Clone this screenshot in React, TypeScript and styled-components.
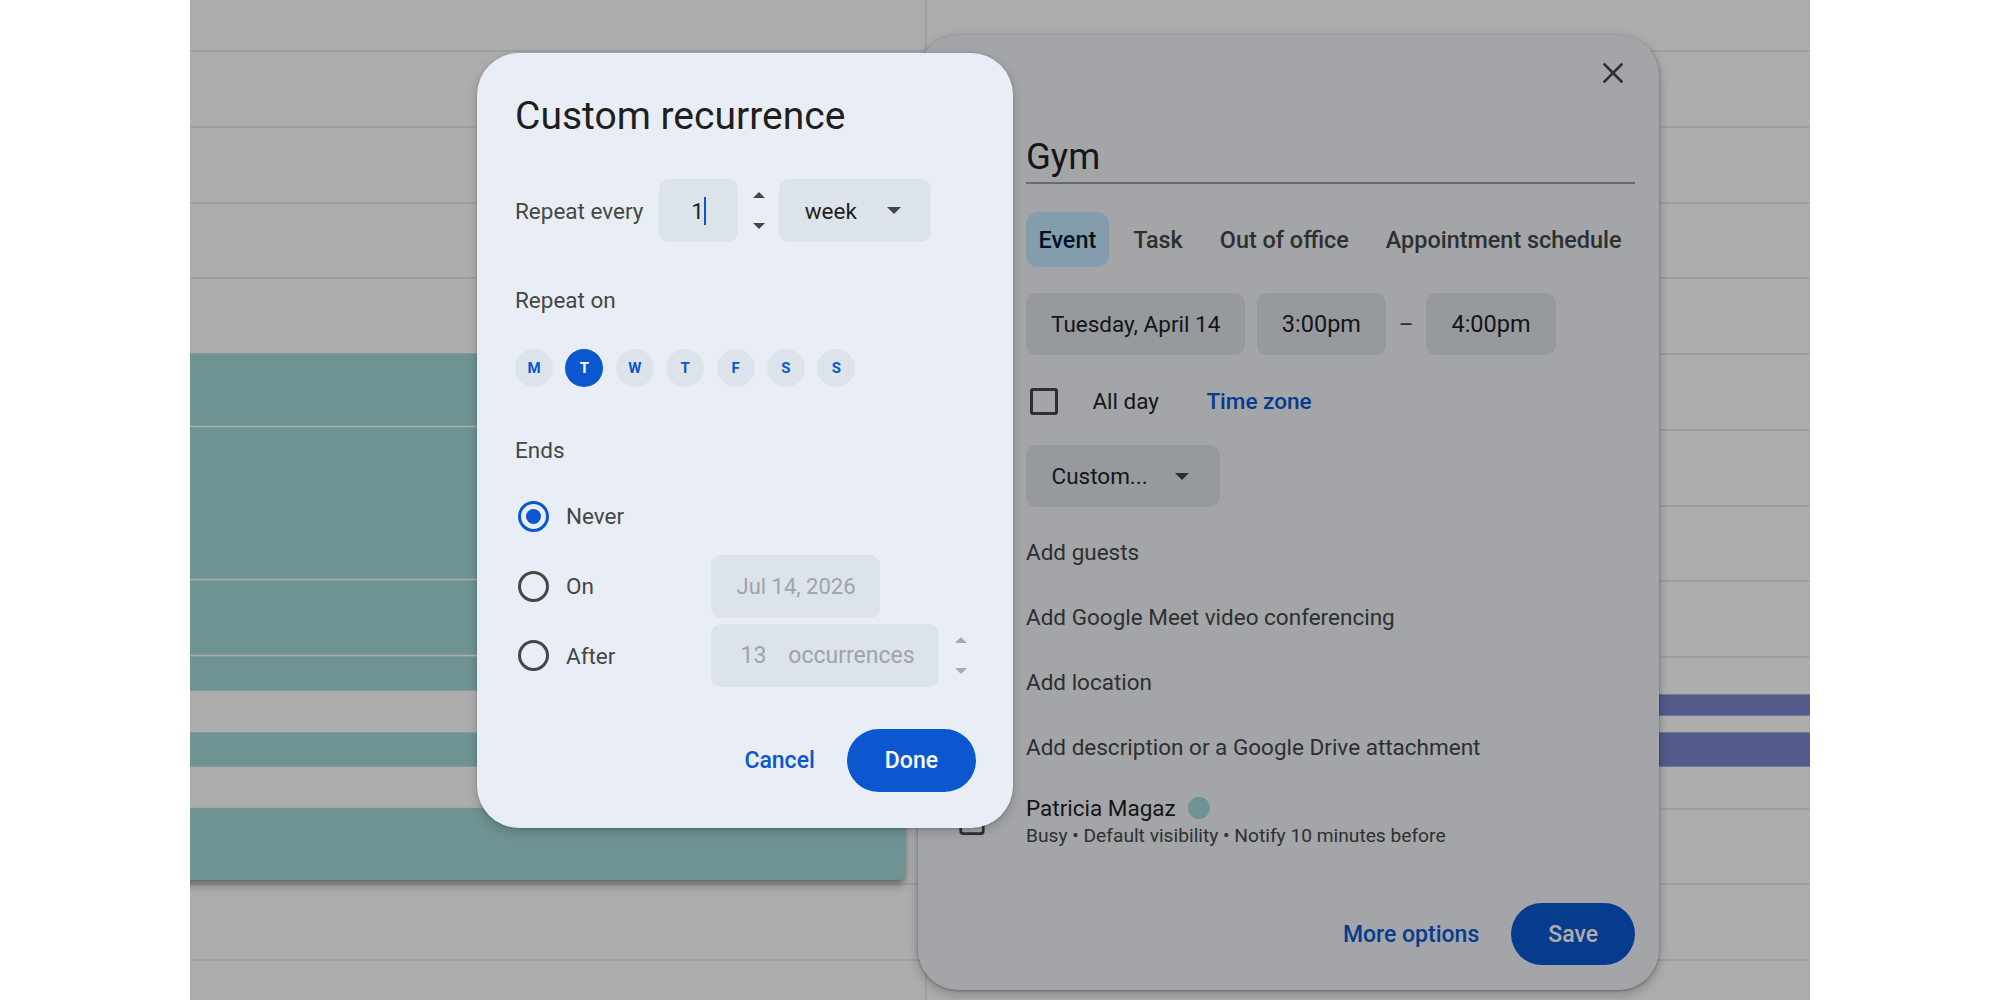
import React from "react";
import styled, { createGlobalStyle } from "styled-components";
import { Calendar, Clock, Users, Video, MapPin, AlignLeft } from "lucide-react";

const FONT = `Roboto, "Liberation Sans", Arial, sans-serif`;
const TEAL = "#a4d8d8";
const LAVENDER = "#7986cb";
const BLUE = "#0b57d0";
const FIELD = "#dde3ea";
const TEXT_SIZE = "22.5px";

const GlobalStyle = createGlobalStyle`
  *, *::before, *::after { box-sizing: border-box; }
  html, body { margin: 0; padding: 0; background: #ffffff; }
  body { font-family: ${FONT}; -webkit-font-smoothing: antialiased; }
  button { font-family: inherit; }
`;

const HOUR_HEIGHT = 75.75;

type CalEvent = { top: number; height: number; color: string; lifted?: boolean };

const dayOneEvents: CalEvent[] = [
  { top: 353, height: 73, color: TEAL },
  { top: 427, height: 152, color: TEAL },
  { top: 580, height: 75, color: TEAL },
  { top: 656, height: 35, color: TEAL },
  { top: 732, height: 35, color: TEAL },
  { top: 808, height: 72, color: TEAL, lifted: true },
];

const dayTwoEvents: CalEvent[] = [
  { top: 694, height: 22, color: LAVENDER },
  { top: 732, height: 35, color: LAVENDER },
];

const weekDays = ["M", "T", "W", "T", "F", "S", "S"];

/* ---------- calendar background ---------- */

const Screen = styled.div`
  position: relative;
  width: 1620px;
  height: 1000px;
  margin: 0 auto;
  overflow: hidden;
  background: #ffffff;
`;

const CalendarGrid = styled.div`
  display: grid;
  grid-template-columns: 735px 1fr;
  height: 100%;
`;

const DayColumn = styled.div<{ $divider?: boolean }>`
  position: relative;
  display: flex;
  flex-direction: column;
  border-left: ${(p) => (p.$divider ? "2px solid #e6ebf2" : "none")};
`;

const LeadSlot = styled.div`
  flex: none;
  height: 50px;
`;

const HourSlot = styled.div`
  flex: none;
  height: ${HOUR_HEIGHT}px;
  border-top: 2px solid #e6ebf2;
`;

const EventBlock = styled.div<{ $top: number; $height: number; $color: string; $lifted?: boolean; $offset: number }>`
  position: absolute;
  left: ${(p) => p.$offset}px;
  right: ${(p) => (p.$offset < 0 ? "20px" : "-12px")};
  top: ${(p) => p.$top}px;
  height: ${(p) => p.$height}px;
  background: ${(p) => p.$color};
  border-radius: 6px;
  box-shadow: ${(p) =>
    p.$lifted
      ? "0 6px 10px rgba(0,0,0,0.28), 0 2px 4px rgba(0,0,0,0.2)"
      : "inset 0 1px 0 rgba(255,255,255,0.35), inset 0 -1px 0 rgba(255,255,255,0.35)"};
`;

const Scrim = styled.div`
  position: absolute;
  inset: 0;
  background: rgba(0, 0, 0, 0.32);
`;

/* ---------- event quick-create dialog ---------- */

const EventDialog = styled.section`
  position: absolute;
  left: 728px;
  top: 35px;
  width: 741px;
  height: 955px;
  padding: 14px 24px 25px 39px;
  display: flex;
  flex-direction: column;
  background: #f0f4f9;
  border-radius: 40px;
  box-shadow: 0 4px 8px 3px rgba(0, 0, 0, 0.15), 0 1px 3px rgba(0, 0, 0, 0.3);
  color: #1f1f1f;
`;

const DialogHeader = styled.div`
  display: flex;
  justify-content: flex-end;
  height: 48px;
`;

const CloseButton = styled.button`
  width: 48px;
  height: 48px;
  margin-right: -2px;
  display: grid;
  place-items: center;
  border: none;
  background: transparent;
  padding: 0;
`;

const FieldRow = styled.div`
  display: grid;
  grid-template-columns: 69px 1fr;
  align-items: center;
`;

const IconCell = styled.div`
  display: flex;
  align-items: center;
  color: #444746;
`;

const TitleRow = styled(FieldRow)`
  margin-top: 39px;
`;

const TitleField = styled.div`
  font-size: 36.5px;
  line-height: 41px;
  padding-bottom: 5px;
  border-bottom: 2px solid #9aa0a6;
  color: #1f1f1f;
`;

const TabsRow = styled(FieldRow)`
  margin-top: 28px;
`;

const TabList = styled.div`
  display: flex;
  gap: 12px;
  white-space: nowrap;
`;

const Tab = styled.div<{ $active?: boolean }>`
  flex: none;
  height: 55px;
  padding: 0 12.5px;
  display: flex;
  align-items: center;
  border-radius: 12px;
  font-size: 23.4px;
  font-weight: 500;
  white-space: nowrap;
  background: ${(p) => (p.$active ? "#c2e7ff" : "transparent")};
  color: ${(p) => (p.$active ? "#001d35" : "#444746")};
`;

const DateRow = styled(FieldRow)`
  margin-top: 26px;
`;

const DateGroup = styled.div`
  display: flex;
  align-items: center;
`;

const FieldChip = styled.div`
  height: 62px;
  padding: 0 25px;
  display: flex;
  align-items: center;
  border-radius: 10px;
  background: ${FIELD};
  font-size: ${TEXT_SIZE};
  color: #1f1f1f;
  white-space: nowrap;
`;

const TimeChip = styled(FieldChip)`
  font-size: 23.5px;
`;

const StartChip = styled(TimeChip)`
  margin-left: 11.5px;
`;

const Dash = styled.span`
  width: 40.5px;
  text-align: center;
  font-size: ${TEXT_SIZE};
  color: #444746;
`;

const AllDayRow = styled(FieldRow)`
  margin-top: 23px;
  height: 46px;
`;

const AllDayGroup = styled.div`
  display: flex;
  align-items: center;
`;

const Checkbox = styled.span`
  width: 28px;
  height: 27px;
  margin-left: 4.4px;
  border: 3px solid #444746;
  border-radius: 3px;
`;

const AllDayLabel = styled.span`
  width: 114px;
  margin-left: 34px;
  font-size: ${TEXT_SIZE};
  color: #1f1f1f;
`;

const LinkText = styled.span`
  font-size: 22.5px;
  font-weight: 500;
  color: ${BLUE};
`;

const RecurrenceRow = styled(FieldRow)`
  margin-top: 21px;
`;

const SelectChip = styled(FieldChip)`
  width: 193.5px;
  padding: 0 30.5px 0 25.5px;
  justify-content: space-between;
`;

const FirstOptionRow = styled(FieldRow)`
  margin-top: 12.5px;
  height: 65px;
`;

const OptionRow = styled(FieldRow)`
  height: 65px;
`;

const OptionText = styled.span`
  font-size: ${TEXT_SIZE};
  color: #444746;
`;

const OwnerRow = styled(FieldRow)`
  margin-top: 13.5px;
  align-items: start;
`;

const OwnerIcon = styled(IconCell)`
  margin-top: 12.5px;
`;

const OwnerName = styled.div`
  display: flex;
  align-items: center;
  gap: 12px;
  height: 30px;
  font-size: ${TEXT_SIZE};
  color: #1f1f1f;
`;

const CalendarDot = styled.span`
  width: 22.5px;
  height: 22.5px;
  border-radius: 50%;
  background: ${TEAL};
`;

const OwnerMeta = styled.div`
  height: 26px;
  line-height: 26px;
  font-size: 19.2px;
  color: #444746;
`;

const EventFooter = styled.div`
  margin-top: auto;
  display: flex;
  justify-content: flex-end;
  align-items: center;
  gap: 12px;
`;

const TextButton = styled.button`
  height: 62px;
  padding: 0 20px;
  border: none;
  border-radius: 31px;
  background: transparent;
  font-size: 23px;
  font-weight: 500;
  color: ${BLUE};
`;

const FilledButton = styled.button`
  height: 62px;
  padding: 0 37px;
  border: none;
  border-radius: 31px;
  background: ${BLUE};
  font-size: 23px;
  font-weight: 500;
  color: #ffffff;
`;

/* ---------- custom recurrence dialog ---------- */

const RecurrenceDialog = styled.section`
  position: absolute;
  left: 287px;
  top: 53px;
  width: 536px;
  height: 775px;
  padding: 39px 37px 36px 38px;
  display: flex;
  flex-direction: column;
  background: #e9eef6;
  border-radius: 42px;
  box-shadow: 0 4px 8px 3px rgba(0, 0, 0, 0.1), 0 1px 3px rgba(0, 0, 0, 0.2);
`;

const DialogTitle = styled.h2`
  margin: 0;
  font-size: 39px;
  line-height: 48px;
  font-weight: 400;
  color: #1f1f1f;
`;

const RepeatEveryRow = styled.div`
  margin-top: 39px;
  height: 63px;
  display: flex;
  align-items: center;
`;

const FieldLabel = styled.div`
  font-size: ${TEXT_SIZE};
  line-height: 30px;
  color: #444746;
`;

const RepeatEveryLabel = styled(FieldLabel)`
  flex: 0 0 143.8px;
`;

const CountBox = styled.div`
  width: 79.6px;
  height: 63px;
  display: flex;
  align-items: center;
  justify-content: center;
  border-radius: 10px;
  background: ${FIELD};
  font-size: ${TEXT_SIZE};
  color: #1f1f1f;
`;

const Caret = styled.span`
  width: 2px;
  height: 28px;
  background: ${BLUE};
`;

const Stepper = styled.div<{ $width: number }>`
  width: ${(p) => p.$width}px;
  height: 63px;
  display: flex;
  flex-direction: column;
  align-items: center;
  justify-content: center;
  gap: 25px;
`;

const UnitSelect = styled.div`
  width: 152.3px;
  height: 63px;
  padding: 0 30px 0 26px;
  display: flex;
  align-items: center;
  justify-content: space-between;
  border-radius: 10px;
  background: ${FIELD};
  font-size: ${TEXT_SIZE};
  color: #1f1f1f;
`;

const RepeatOnLabel = styled(FieldLabel)`
  margin-top: 42.8px;
`;

const DayPicker = styled.div`
  margin-top: 34px;
  display: flex;
  gap: 12.4px;
`;

const DayToggle = styled.button<{ $active?: boolean }>`
  width: 38px;
  height: 38px;
  padding: 0;
  border: none;
  border-radius: 50%;
  display: grid;
  place-items: center;
  background: ${(p) => (p.$active ? BLUE : FIELD)};
  color: ${(p) => (p.$active ? "#ffffff" : BLUE)};
  font-size: 15px;
  font-weight: 700;
`;

const EndsLabel = styled(FieldLabel)`
  margin-top: 47.8px;
`;

const EndOptions = styled.div`
  margin-top: 20.2px;
  display: flex;
  flex-direction: column;
  gap: 6.75px;
`;

const EndOption = styled.div`
  height: 63px;
  display: grid;
  grid-template-columns: 195.5px auto auto;
  justify-content: start;
  align-items: center;
`;

const RadioLabel = styled.label`
  display: flex;
  align-items: center;
  gap: 17px;
  font-size: ${TEXT_SIZE};
  color: #444746;
`;

const RadioMark = styled.span<{ $checked?: boolean }>`
  width: 31px;
  height: 31px;
  margin-left: 3px;
  border-radius: 50%;
  border: 3px solid ${(p) => (p.$checked ? BLUE : "#444746")};
  display: grid;
  place-items: center;
  &::after {
    content: "";
    width: 15px;
    height: 15px;
    border-radius: 50%;
    background: ${(p) => (p.$checked ? BLUE : "transparent")};
  }
`;

const EndInput = styled.div<{ $width: number }>`
  width: ${(p) => p.$width}px;
  height: 63px;
  padding: 0 8px 0 26px;
  display: flex;
  align-items: center;
  gap: 22px;
  border-radius: 10px;
  background: ${FIELD};
  font-size: 22px;
  color: #a0a4a8;
  white-space: nowrap;
`;

const OccurrenceInput = styled(EndInput)`
  padding-left: 30px;
  font-size: 23px;
`;

const DialogActions = styled.div`
  margin-top: auto;
  display: flex;
  justify-content: flex-end;
  align-items: center;
  gap: 12px;
`;

const CancelButton = styled(TextButton)`
  height: 63px;
`;

const DoneButton = styled(FilledButton)`
  height: 63px;
  padding: 0 38px;
  border-radius: 32px;
`;

/* ---------- small drawings ---------- */

const Triangle = ({ dir = "down", color = "#444746", w = 14 }: { dir?: "up" | "down"; color?: string; w?: number }) => (
  <svg width={w} height={w / 2} viewBox="0 0 14 7" style={{ display: "block" }}>
    <polygon points={dir === "down" ? "0,0 14,0 7,7" : "0,7 14,7 7,0"} fill={color} />
  </svg>
);

const CloseIcon = () => (
  <svg width="20" height="20" viewBox="0 0 20 20">
    <path d="M1.5 1.5 L18.5 18.5 M18.5 1.5 L1.5 18.5" stroke="#444746" strokeWidth="2.6" strokeLinecap="square" />
  </svg>
);

export default function App() {
  return (
    <>
      <GlobalStyle />
      <Screen>
        <CalendarGrid>
          <DayColumn>
            <LeadSlot />
            {Array.from({ length: 13 }).map((_, i) => (
              <HourSlot key={i} />
            ))}
            {dayOneEvents.map((e, i) => (
              <EventBlock key={i} $offset={-12} $top={e.top} $height={e.height} $color={e.color} $lifted={e.lifted} />
            ))}
          </DayColumn>
          <DayColumn $divider>
            <LeadSlot />
            {Array.from({ length: 13 }).map((_, i) => (
              <HourSlot key={i} />
            ))}
            {dayTwoEvents.map((e, i) => (
              <EventBlock key={i} $offset={690} $top={e.top} $height={e.height} $color={e.color} />
            ))}
          </DayColumn>
        </CalendarGrid>

        <EventDialog>
          <DialogHeader>
            <CloseButton aria-label="Close">
              <CloseIcon />
            </CloseButton>
          </DialogHeader>

          <TitleRow>
            <IconCell />
            <TitleField>Gym</TitleField>
          </TitleRow>

          <TabsRow>
            <IconCell />
            <TabList>
              <Tab $active>Event</Tab>
              <Tab>Task</Tab>
              <Tab>Out of office</Tab>
              <Tab>Appointment schedule</Tab>
            </TabList>
          </TabsRow>

          <DateRow>
            <IconCell>
              <Clock size={30} strokeWidth={2} />
            </IconCell>
            <DateGroup>
              <FieldChip>Tuesday, April 14</FieldChip>
              <StartChip>3:00pm</StartChip>
              <Dash>–</Dash>
              <TimeChip>4:00pm</TimeChip>
            </DateGroup>
          </DateRow>

          <AllDayRow>
            <IconCell />
            <AllDayGroup>
              <Checkbox />
              <AllDayLabel>All day</AllDayLabel>
              <LinkText>Time zone</LinkText>
            </AllDayGroup>
          </AllDayRow>

          <RecurrenceRow>
            <IconCell />
            <SelectChip>
              <span>Custom...</span>
              <Triangle />
            </SelectChip>
          </RecurrenceRow>

          <FirstOptionRow>
            <IconCell>
              <Users size={30} strokeWidth={2} />
            </IconCell>
            <OptionText>Add guests</OptionText>
          </FirstOptionRow>
          <OptionRow>
            <IconCell>
              <Video size={30} strokeWidth={2} />
            </IconCell>
            <OptionText>Add Google Meet video conferencing</OptionText>
          </OptionRow>
          <OptionRow>
            <IconCell>
              <MapPin size={30} strokeWidth={2} />
            </IconCell>
            <OptionText>Add location</OptionText>
          </OptionRow>
          <OptionRow>
            <IconCell>
              <AlignLeft size={30} strokeWidth={2} />
            </IconCell>
            <OptionText>Add description or a Google Drive attachment</OptionText>
          </OptionRow>

          <OwnerRow>
            <OwnerIcon>
              <Calendar size={30} strokeWidth={2.2} />
            </OwnerIcon>
            <div>
              <OwnerName>
                Patricia Magaz
                <CalendarDot />
              </OwnerName>
              <OwnerMeta>Busy • Default visibility • Notify 10 minutes before</OwnerMeta>
            </div>
          </OwnerRow>

          <EventFooter>
            <TextButton>More options</TextButton>
            <FilledButton>Save</FilledButton>
          </EventFooter>
        </EventDialog>

        <Scrim />

        <RecurrenceDialog role="dialog" aria-label="Custom recurrence">
          <DialogTitle>Custom recurrence</DialogTitle>

          <RepeatEveryRow>
            <RepeatEveryLabel>Repeat every</RepeatEveryLabel>
            <CountBox>
              1<Caret />
            </CountBox>
            <Stepper $width={40.3}>
              <Triangle dir="up" w={12} />
              <Triangle dir="down" w={12} />
            </Stepper>
            <UnitSelect>
              <span>week</span>
              <Triangle />
            </UnitSelect>
          </RepeatEveryRow>

          <RepeatOnLabel>Repeat on</RepeatOnLabel>
          <DayPicker>
            {weekDays.map((d, i) => (
              <DayToggle key={i} $active={i === 1}>
                {d}
              </DayToggle>
            ))}
          </DayPicker>

          <EndsLabel>Ends</EndsLabel>
          <EndOptions>
            <EndOption>
              <RadioLabel>
                <RadioMark $checked />
                Never
              </RadioLabel>
            </EndOption>
            <EndOption>
              <RadioLabel>
                <RadioMark />
                On
              </RadioLabel>
              <EndInput $width={169.5}>Jul 14, 2026</EndInput>
            </EndOption>
            <EndOption>
              <RadioLabel>
                <RadioMark />
                After
              </RadioLabel>
              <OccurrenceInput $width={228}>
                <span>13</span>
                <span>occurrences</span>
              </OccurrenceInput>
              <Stepper $width={44}>
                <Triangle dir="up" w={12} color="#a8abae" />
                <Triangle dir="down" w={12} color="#a8abae" />
              </Stepper>
            </EndOption>
          </EndOptions>

          <DialogActions>
            <CancelButton>Cancel</CancelButton>
            <DoneButton>Done</DoneButton>
          </DialogActions>
        </RecurrenceDialog>
      </Screen>
    </>
  );
}
